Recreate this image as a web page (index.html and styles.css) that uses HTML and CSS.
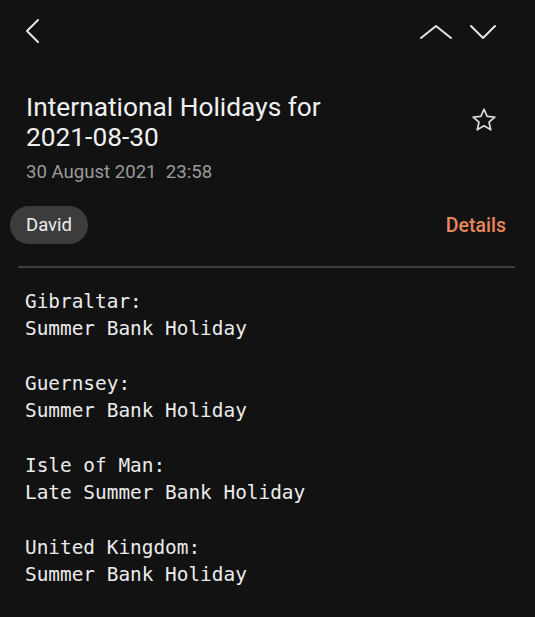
FILE: index.html
```html
<!DOCTYPE html>
<html>
<head>
<meta charset="utf-8">
<link rel="stylesheet" href="styles.css">
</head>
<body>
<div class="screen">
  <div class="topbar">
    <svg class="back" width="24" height="28" viewBox="0 0 24 28"><path d="M14 3 L3 14 L14 25" fill="none" stroke="#e6e6e6" stroke-width="2" stroke-linecap="round" stroke-linejoin="round"/></svg>
    <div class="navs">
      <svg width="34" height="16" viewBox="0 0 34 16"><path d="M2 14 L17 2 L32 14" fill="none" stroke="#e6e6e6" stroke-width="2" stroke-linecap="round" stroke-linejoin="round"/></svg>
      <svg width="28" height="16" viewBox="0 0 28 16"><path d="M2 2 L14 14 L26 2" fill="none" stroke="#e6e6e6" stroke-width="2" stroke-linecap="round" stroke-linejoin="round"/></svg>
    </div>
  </div>
  <div class="header">
    <div class="titles">
      <h1 class="title">International Holidays for 2021-08-30</h1>
      <div class="date">30 August 2021&nbsp; 23:58</div>
    </div>
    <svg class="star" width="28" height="28" viewBox="0 0 24 24"><path d="M12 2.8 L14.7 8.9 L21.3 9.5 L16.3 13.9 L17.8 20.4 L12 17 L6.2 20.4 L7.7 13.9 L2.7 9.5 L9.3 8.9 Z" fill="none" stroke="#d8d8d8" stroke-width="1.5" stroke-linejoin="round"/></svg>
  </div>
  <div class="sender">
    <span class="chip">David</span>
    <span class="details">Details</span>
  </div>
  <div class="divider"></div>
  <pre class="body">Gibraltar:
Summer Bank Holiday

Guernsey:
Summer Bank Holiday

Isle of Man:
Late Summer Bank Holiday

United Kingdom:
Summer Bank Holiday</pre>
</div>
</body>
</html>
```
FILE: styles.css
```css
html, body {
  margin: 0;
  padding: 0;
  background: #121212;
}
.screen {
  width: 535px;
  height: 617px;
  background: #121212;
  font-family: Roboto, "Noto Sans", sans-serif;
  color: #ececec;
  overflow: hidden;
}
.topbar {
  display: flex;
  justify-content: space-between;
  align-items: center;
  padding: 17px 38px 0 24px;
  height: 28px;
}
.back { display: block; }
.navs {
  display: flex;
  gap: 16px;
  align-items: center;
  padding-top: 2px;
}
.navs svg { display: block; }
.header {
  display: flex;
  align-items: center;
  justify-content: space-between;
  padding: 47px 37px 0 26px;
}
.title {
  margin: 0;
  font-weight: 400;
  font-size: 26.3px;
  line-height: 30px;
  width: 340px;
  color: #f0f0f0;
}
.date {
  margin-top: 9px;
  font-size: 18.6px;
  line-height: 22px;
  color: #9a9a9a;
}
.star { display: block; margin-top: -36px; }
.sender {
  display: flex;
  justify-content: space-between;
  align-items: center;
  padding: 23px 29px 0 10px;
}
.chip {
  background: #3c3c3c;
  color: #ececec;
  font-size: 18.5px;
  line-height: 38px;
  height: 38px;
  padding: 0 16px;
  border-radius: 19px;
}
.details {
  color: #e8875c;
  font-size: 19.5px;
  font-weight: 500;
}
.divider {
  margin: 22px 20px 0 18px;
  height: 2px;
  background: #3e3e3e;
}
.body {
  margin: 20px 0 0 25px;
  font-family: "DejaVu Sans Mono", monospace;
  font-size: 19.4px;
  line-height: 27.3px;
  color: #ececec;
}
```
